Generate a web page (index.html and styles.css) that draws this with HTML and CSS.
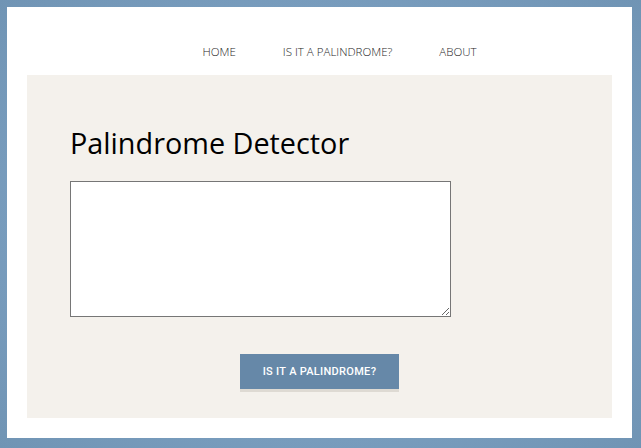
FILE: index.html
```html
<!DOCTYPE html>
<html lang="en">
<head>
<meta charset="utf-8">
<title>Palindrome Detector</title>
<link rel="stylesheet" href="styles.css">
</head>
<body>
<div class="page">
  <nav class="nav">
    <ul class="nav-list">
      <li class="nav-item"><a href="#" class="nav-link">Home</a></li>
      <li class="nav-item"><a href="#" class="nav-link">Is it a palindrome?</a></li>
      <li class="nav-item"><a href="#" class="nav-link">About</a></li>
    </ul>
  </nav>
  <main class="panel">
    <h1 class="title">Palindrome Detector</h1>
    <textarea class="input" aria-label="Text to check"></textarea>
    <div class="actions">
      <button class="btn" type="button">Is it a palindrome?</button>
    </div>
  </main>
</div>
</body>
</html>
```

FILE: styles.css
```css
html, body {
  margin: 0;
  height: 100%;
}
body {
  background: radial-gradient(ellipse at 50% 50%, #84a8c8 0%, #7a9ebf 60%, #7094b4 100%);
  padding: 7px 9px 10px 7px;
  box-sizing: border-box;
  font-family: "Open Sans", "Liberation Sans", sans-serif;
}
.page {
  background: #ffffff;
  height: 431px;
  padding: 0 20px;
  box-sizing: border-box;
}
.nav {
  padding: 37px 0 0;
  height: 68px;
  box-sizing: border-box;
}
.nav-list {
  list-style: none;
  margin: 0;
  padding: 0 0 0 40px;
  display: flex;
  justify-content: center;
  gap: 47px;
  font-size: 11.5px;
  line-height: 15px;
}
.nav-item {
  font-size: 11.5px;
}
.nav-link {
  font-weight: 300;
  text-transform: uppercase;
  color: #1e1e1e;
  text-decoration: none;
}
.panel {
  background: #f4f1ec;
  height: 343px;
  padding: 49px 43px 0;
  box-sizing: border-box;
}
.title {
  margin: 0 0 19px;
  font-size: 28.8px;
  font-weight: 400;
  line-height: 38px;
  color: #000000;
}
.input {
  display: block;
  width: 381px;
  height: 136px;
  box-sizing: border-box;
  border: 1px solid #767676;
  background: #ffffff;
  margin: 0;
  padding: 2px;
}
.actions {
  display: flex;
  justify-content: center;
  margin-top: 37px;
}
.btn {
  width: 159px;
  height: 35px;
  border: 0;
  background: #6688a8;
  color: #ffffff;
  font-family: Roboto, "Liberation Sans", sans-serif;
  font-weight: 500;
  font-size: 11px;
  text-transform: uppercase;
  letter-spacing: 0.3px;
  box-shadow: 0 3px 0 #dedad3;
  padding: 0;
}
```
